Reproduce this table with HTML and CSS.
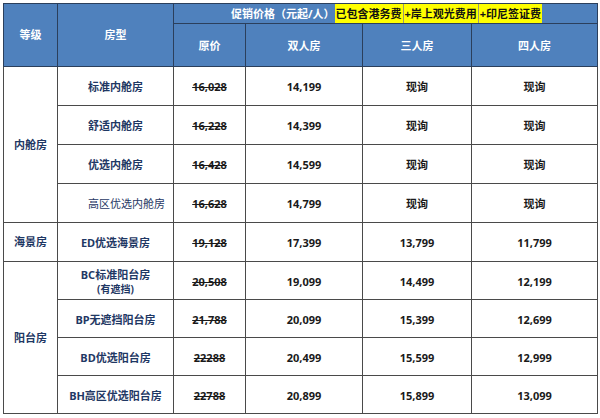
FILE: index.html
```html
<!DOCTYPE html>
<html lang="zh-CN">
<head>
<meta charset="utf-8">
<link rel="stylesheet" href="styles.css">
</head>
<body>
<div class="wrap">
<table class="price">
  <colgroup>
    <col class="c1"><col class="c2"><col class="c3"><col class="c4"><col class="c5"><col class="c6">
  </colgroup>
  <thead>
    <tr class="h1">
      <th rowspan="2">等级</th>
      <th rowspan="2">房型</th>
      <th colspan="4" class="promo">
        <div class="promo-line">
          <span class="promo-title">促销价格（元起/人）</span><span class="hl">已包含港务费</span><span class="hl sep">+岸上观光费用</span><span class="hl sep">+印尼签证费</span>
        </div>
      </th>
    </tr>
    <tr class="h2">
      <th>原价</th>
      <th>双人房</th>
      <th>三人房</th>
      <th>四人房</th>
    </tr>
  </thead>
  <tbody>
    <tr class="r39">
      <td rowspan="4" class="grade">内舱房</td>
      <td class="room">标准内舱房</td>
      <td class="orig">16,028</td>
      <td>14,199</td>
      <td>现询</td>
      <td>现询</td>
    </tr>
    <tr class="r39">
      <td class="room">舒适内舱房</td>
      <td class="orig">16,228</td>
      <td>14,399</td>
      <td>现询</td>
      <td>现询</td>
    </tr>
    <tr class="r39">
      <td class="room">优选内舱房</td>
      <td class="orig">16,428</td>
      <td>14,599</td>
      <td>现询</td>
      <td>现询</td>
    </tr>
    <tr class="r39">
      <td class="room room-light">高区优选内舱房</td>
      <td class="orig">16,628</td>
      <td>14,799</td>
      <td>现询</td>
      <td>现询</td>
    </tr>
    <tr class="r39">
      <td class="grade">海景房</td>
      <td class="room">ED优选海景房</td>
      <td class="orig">19,128</td>
      <td>17,399</td>
      <td>13,799</td>
      <td>11,799</td>
    </tr>
    <tr class="r38">
      <td rowspan="4" class="grade">阳台房</td>
      <td class="room">BC标准阳台房<br><span class="note">(有遮挡)</span></td>
      <td class="orig">20,508</td>
      <td>19,099</td>
      <td>14,499</td>
      <td>12,199</td>
    </tr>
    <tr class="r38">
      <td class="room">BP无遮挡阳台房</td>
      <td class="orig">21,788</td>
      <td>20,099</td>
      <td>15,399</td>
      <td>12,699</td>
    </tr>
    <tr class="r38">
      <td class="room">BD优选阳台房</td>
      <td class="orig">22288</td>
      <td>20,499</td>
      <td>15,599</td>
      <td>12,999</td>
    </tr>
    <tr class="r38">
      <td class="room">BH高区优选阳台房</td>
      <td class="orig">22788</td>
      <td>20,899</td>
      <td>15,899</td>
      <td>13,099</td>
    </tr>
  </tbody>
</table>
</div>
</body>
</html>
```

FILE: styles.css
```css
html, body {
  margin: 0;
  padding: 0;
  background: #ffffff;
}

.wrap {
  padding: 3px 3px 0 3px;
}

.price {
  border-collapse: collapse;
  table-layout: fixed;
  width: 594px;
  font-family: "Noto Sans", "Noto Sans CJK SC", sans-serif;
  font-size: 11px;
  font-weight: 700;
  color: #1a1a1a;
  border: 1px solid #3a3a3a;
}

.c1 { width: 54px; }
.c2 { width: 116px; }
.c3 { width: 72px; }
.c4 { width: 117px; }
.c5 { width: 109px; }
.c6 { width: 126px; }

.price th,
.price td {
  border: 1px solid #4a4a4a;
  padding: 0;
  text-align: center;
  vertical-align: middle;
  line-height: 14px;
}

.price th {
  background: #4f81bd;
  color: #ffffff;
  font-weight: 700;
  border-color: #2b3f5c;
}

.h1 th { height: 19px; }
.h2 th { height: 40px; padding-top: 2px; }

.promo {
  padding: 0;
}

.promo-line {
  display: flex;
  justify-content: center;
  align-items: stretch;
  height: 19px;
  padding-left: 2px;
}

.promo-title {
  line-height: 20px;
  color: #ffffff;
}

.hl {
  background: #ffff00;
  color: #111111;
  line-height: 20px;
  padding: 0 1px;
}

.hl.sep {
  border-left: 1px solid #9a9a70;
}

.price td {
  padding-top: 2px;
}

.r39 td { height: 36px; }
.r38 td { height: 35px; }

.grade {
  color: #1f3864;
}

.price td.grade {
  padding-top: 0;
}

.room {
  color: #1f3864;
}

.price td.room-light {
  font-weight: 400;
  text-align: left;
  padding-left: 30px;
  color: #1f3864;
}

.note {
  font-size: 10px;
  line-height: 14px;
}

.orig {
  text-decoration: line-through;
  text-decoration-thickness: 1px;
}
```
